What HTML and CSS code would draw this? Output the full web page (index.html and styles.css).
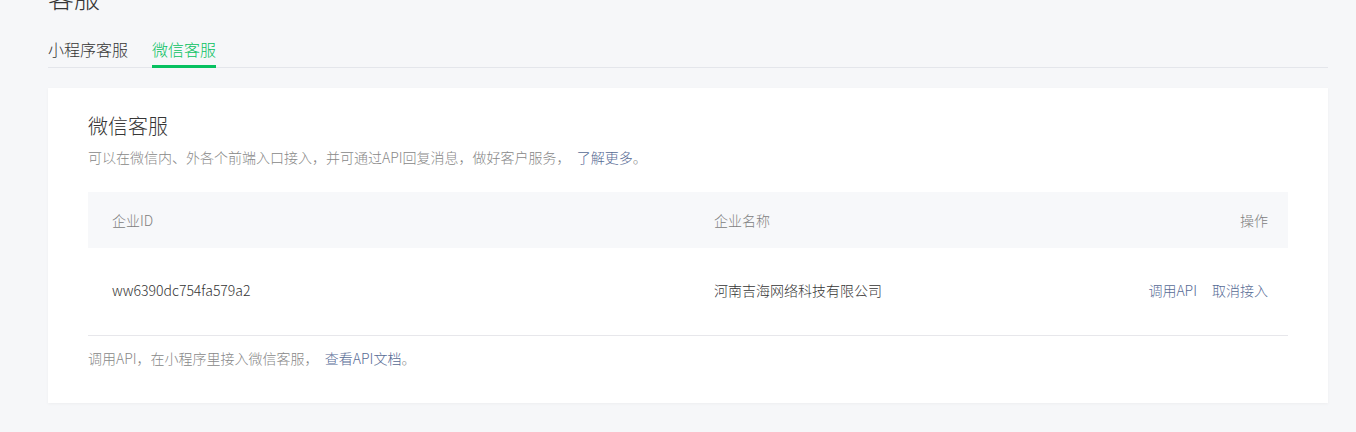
FILE: index.html
```html
<!DOCTYPE html>
<html lang="zh-CN">
<head>
<meta charset="utf-8">
<title>客服</title>
<link rel="stylesheet" href="styles.css">
</head>
<body>
<div class="page">
  <h2 class="page-title">客服</h2>
  <div class="tabs">
    <a class="tab">小程序客服</a>
    <a class="tab tab-active">微信客服</a>
  </div>
  <section class="card">
    <h3 class="card-title">微信客服</h3>
    <p class="card-desc">可以在微信内、外各个前端入口接入，并可通过API回复消息，做好客户服务，&nbsp; <a class="link">了解更多</a>。</p>
    <div class="table">
      <div class="row head">
        <div class="cell c1">企业ID</div>
        <div class="cell c2">企业名称</div>
        <div class="cell c3">操作</div>
      </div>
      <div class="row body">
        <div class="cell c1">ww6390dc754fa579a2</div>
        <div class="cell c2">河南吉海网络科技有限公司</div>
        <div class="cell c3 actions"><a class="link">调用API</a><a class="link">取消接入</a></div>
      </div>
    </div>
    <p class="card-foot">调用API，在小程序里接入微信客服，&nbsp; <a class="link">查看API文档</a>。</p>
  </section>
</div>
</body>
</html>
```

FILE: styles.css
```css
* { box-sizing: border-box; }
html, body {
  margin: 0;
  padding: 0;
  background: #f6f7f9;
  font-family: "Noto Sans CJK SC", "Noto Sans", sans-serif;
  font-weight: 300;
  color: #353535;
}
.page {
  padding: 0 28px 0 48px;
  overflow: hidden;
  height: 432px;
}
.page-title {
  margin: -21px 0 0;
  font-size: 26px;
  line-height: 36px;
  font-weight: 300;
  color: #353535;
}
.tabs {
  display: flex;
  gap: 24px;
  margin-top: 19px;
  border-bottom: 1px solid #e4e6eb;
  height: 34px;
}
.tab {
  font-size: 16px;
  line-height: 31px;
  height: 34px;
  color: #353535;
  cursor: pointer;
}
.tab-active {
  color: #07c160;
  border-bottom: 3px solid #07c160;
}
.card {
  margin-top: 20px;
  background: #fff;
  padding: 24px 40px 34px;
  box-shadow: 0 1px 3px rgba(0,0,0,0.04);
}
.card-title {
  margin: 0 0 6px;
  font-size: 20px;
  line-height: 28px;
  font-weight: 300;
  color: #353535;
}
.card-desc {
  margin: 0 0 24px;
  font-size: 14px;
  line-height: 22px;
  color: #888;
}
.link {
  color: #576b95;
  text-decoration: none;
  cursor: pointer;
}
.table {
  font-size: 14px;
}
.row {
  display: flex;
  align-items: center;
}
.row.head {
  height: 56px;
  background: #f7f8fa;
  color: #808080;
}
.row.body {
  height: 88px;
  border-bottom: 1px solid #e7e7eb;
  color: #353535;
  padding-bottom: 3px;
}
.cell.c1 {
  width: 602px;
  padding-left: 24px;
}
.cell.c2 {
  flex: 1;
  padding-left: 24px;
}
.cell.c3 {
  padding-right: 20px;
  text-align: right;
}
.actions {
  display: flex;
  gap: 15px;
}
.card-foot {
  margin: 11px 0 0;
  font-size: 14px;
  line-height: 22px;
  color: #888;
}
```
